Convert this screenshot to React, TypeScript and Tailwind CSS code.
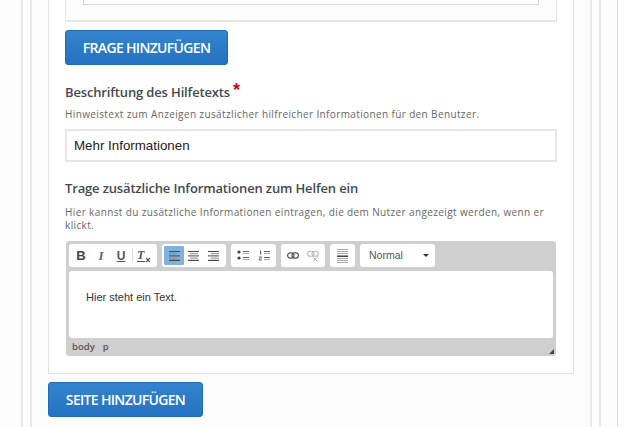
import React from "react";

const open = "font-['Open_Sans','Noto_Sans',sans-serif]";
const arial = "font-['Liberation_Sans',Arial,sans-serif]";

function Group({ w, children }: { w: string; children: React.ReactNode }) {
  return <div className={`relative shrink-0 h-[23px] bg-white rounded-[3px] ${w}`}>{children}</div>;
}

function Slot({ x, children }: { x: string; children: React.ReactNode }) {
  return (
    <span className={`absolute top-0 h-full flex items-center justify-center ${x}`}>
      {children}
    </span>
  );
}

function Lines({ kind }: { kind: "left" | "center" | "right" }) {
  const sx = kind === "left" ? 0 : kind === "center" ? 2 : 3;
  const c = "#4a4a4a";
  return (
    <svg width="11" height="10" viewBox="0 0 11 10">
      <rect x="0" y="0" width="11" height="1" fill={c} />
      <rect x={sx} y="2.2" width="8" height="1" fill="#8a8a8a" />
      <rect x="0" y="4.4" width="11" height="1" fill={c} />
      <rect x={sx} y="6.6" width="8" height="1" fill="#8a8a8a" />
      <rect x="0" y="8.8" width="11" height="1.2" fill={c} />
    </svg>
  );
}

function ListLines() {
  return (
    <>
      <rect x="6" y="1" width="6" height="1" fill="#666" />
      <rect x="6" y="3" width="6" height="1" fill="#aaa" />
      <rect x="6" y="7" width="6" height="1" fill="#666" />
      <rect x="6" y="9" width="6" height="1" fill="#aaa" />
    </>
  );
}

function BlueButton({ children, w }: { children: React.ReactNode; w: string }) {
  return (
    <button className={`${w} block h-[35px] rounded-[3px] border border-[#1e6cb4] bg-gradient-to-b from-[#3383cd] to-[#2373c2] text-white text-[14px] font-semibold tracking-[-0.68px] ${open}`}>
      {children}
    </button>
  );
}

export default function App() {
  return (
    <div className="w-[640px] h-[427px] overflow-hidden bg-white">
      <div className="w-[618px] h-full border-r border-[#dedede] bg-[#fdfdfd] pl-[21px]">
        <div className="w-[580px] h-full border-2 border-y-0 border-[#e6e6e6] bg-white px-[7px]">
          <div className="w-[562px] h-full border-2 border-y-0 border-[#e8e8e8] bg-[#fcfcfc] px-[16px] flex flex-col">
            <div className="h-[374px] w-[526px] shrink-0 border border-t-0 border-[#e2e2e2] bg-white px-[16px]">
              <div className="w-[492px] h-[22px] border-x border-b-2 border-[#e6e6e6] bg-[#fcfcfc] pl-[17px]">
                <div className="w-[456px] h-[5px] border-x border-b border-[#d8d8d8] bg-white" />
              </div>
              <div className="h-[8px]" />
              <BlueButton w="w-[163px]">FRAGE HINZUFÜGEN</BlueButton>
              <div className={`mt-[16px] flex items-start h-[22px] text-[13px] leading-[22px] font-semibold tracking-[-0.15px] text-[#43494f] ${open}`}>
                <span>Beschriftung des Hilfetexts</span>
                <span className={`ml-[3px] text-[#d8001c] text-[18px] leading-[18px] font-bold ${arial}`}>*</span>
              </div>
              <p className={`mt-[5px] h-[13px] text-[10px] leading-[13px] tracking-[0.375px] text-[#666] ${open}`}>
                Hinweistext zum Anzeigen zusätzlicher hilfreicher Informationen für den Benutzer.
              </p>
              <div className={`mt-[8px] w-[492px] h-[33px] border-2 border-[#e6e6e6] bg-white flex items-center pl-[7px] text-[13.33px] text-[#222] ${arial}`}>
                Mehr Informationen
              </div>
              <div className={`mt-[15px] h-[22px] text-[13px] leading-[22px] font-semibold tracking-[-0.15px] text-[#43494f] ${open}`}>
                Trage zusätzliche Informationen zum Helfen ein
              </div>
              <p className={`mt-[7px] w-[480px] text-[10px] leading-[13px] tracking-[0.375px] text-[#666] ${open}`}>
                Hier kannst du zusätzliche Informationen eintragen, die dem Nutzer angezeigt werden, wenn er klickt.
              </p>
              <div className="mt-[9px] ml-[1px] w-[490px] h-[115px] bg-[#cfcfcf] rounded-[3px] px-[3px] pt-[3px] relative flex flex-col">
                <div className="flex gap-[5px] h-[23px] items-center">
                  <Group w="w-[88px]">
                    <Slot x="left-[7px] w-[10px]"><span className={`text-[13px] leading-none font-bold text-[#444] ${arial}`}>B</span></Slot>
                    <Slot x="left-[27px] w-[10px]"><span className={`text-[13px] leading-none italic font-bold text-[#666] font-['Liberation_Serif',serif]`}>I</span></Slot>
                    <Slot x="left-[46px] w-[12px]"><span className={`text-[12px] leading-none font-bold underline text-[#555] ${arial}`}>U</span></Slot>
                    <span className="absolute left-[63px] top-[4px] w-px h-[15px] bg-[#dddddd]" />
                    <Slot x="left-[68px] w-[14px]">
                      <span className="relative block w-[14px] h-[14px]">
                        <span className={`absolute left-0 top-0 text-[12px] leading-[13px] italic font-bold text-[#555] font-['Liberation_Serif',serif]`}>T</span>
                        <span className="absolute left-0 top-[12px] w-[8px] h-px bg-[#555]" />
                        <svg className="absolute left-[8px] top-[8px]" width="6" height="6" viewBox="0 0 6 6"><path d="M1 1l4 4M5 1L1 5" stroke="#555" strokeWidth="1.1" /></svg>
                      </span>
                    </Slot>
                  </Group>
                  <Group w="w-[64px]">
                    <span className="absolute left-[2px] top-[2px] w-[20px] h-[19px] rounded-[1px] bg-[#7fb3de]" />
                    <Slot x="left-[7px] w-[11px]"><Lines kind="left" /></Slot>
                    <Slot x="left-[26px] w-[11px]"><Lines kind="center" /></Slot>
                    <Slot x="left-[46px] w-[11px]"><Lines kind="right" /></Slot>
                  </Group>
                  <Group w="w-[45px]">
                    <Slot x="left-[6px] w-[12px]">
                      <svg width="12" height="11" viewBox="0 0 12 11">
                        <circle cx="2" cy="2" r="1.6" fill="#444" />
                        <circle cx="2" cy="8" r="1.6" fill="#444" />
                        <ListLines />
                      </svg>
                    </Slot>
                    <Slot x="left-[27px] w-[12px]">
                      <svg width="12" height="11" viewBox="0 0 12 11">
                        <rect x="2" y="0.5" width="1.2" height="4" fill="#666" />
                        <path d="M0.8 6.5h3v2h-2v1h2v1h-3v-2.3h2v-.7h-2z" fill="#666" />
                        <ListLines />
                      </svg>
                    </Slot>
                  </Group>
                  <Group w="w-[44px]">
                    <Slot x="left-[6px] w-[12px]">
                      <svg width="12" height="7" viewBox="0 0 12 7" fill="none">
                        <rect x="0.6" y="0.8" width="6.4" height="5.4" rx="2.6" stroke="#555" strokeWidth="1.2" />
                        <rect x="5" y="0.8" width="6.4" height="5.4" rx="2.6" stroke="#555" strokeWidth="1.2" />
                      </svg>
                    </Slot>
                    <Slot x="left-[26px] w-[12px]">
                      <svg width="12" height="12" viewBox="0 0 12 12" fill="none">
                        <rect x="0.6" y="1.3" width="6.4" height="5" rx="2.5" stroke="#bbb" strokeWidth="1.1" />
                        <rect x="5" y="1.3" width="6.4" height="5" rx="2.5" stroke="#bbb" strokeWidth="1.1" />
                        <path d="M6.5 7.5l3.5 3.5M10 7.5L6.5 11" stroke="#aaa" strokeWidth="1" />
                      </svg>
                    </Slot>
                  </Group>
                  <Group w="w-[25px]">
                    <Slot x="left-[7px] w-[11px]">
                      <svg width="11" height="14" viewBox="0 0 11 14">
                        <rect y="0" width="11" height="1" fill="#aaa" />
                        <rect y="2" width="11" height="1" fill="#aaa" />
                        <rect y="4" width="11" height="1" fill="#aaa" />
                        <rect y="6.5" width="11" height="1.4" fill="#333" />
                        <rect y="9" width="11" height="1" fill="#aaa" />
                        <rect y="11" width="11" height="1" fill="#aaa" />
                        <rect y="13" width="11" height="1" fill="#aaa" />
                      </svg>
                    </Slot>
                  </Group>
                  <div className={`flex items-center justify-between w-[75px] shrink-0 h-[23px] bg-white rounded-[3px] pl-[9px] pr-[6px] text-[10.5px] text-[#555] ${arial}`}>
                    <span>Normal</span>
                    <span className="w-0 h-0 border-x-[3px] border-x-transparent border-t-[3px] border-t-[#333]" />
                  </div>
                </div>
                <div className={`mt-[4px] h-[67px] bg-white rounded-[3px] pl-[17px] pt-[19px] text-[11px] leading-[14px] text-[#333] ${arial}`}>
                  Hier steht ein Text.
                </div>
                <div className={`flex gap-[8px] pl-[3px] h-[18px] items-center text-[9.5px] font-semibold text-[#555] ${open}`}>
                  <span>body</span>
                  <span>p</span>
                </div>
                <span className="absolute right-[2px] bottom-[2px] w-0 h-0 border-l-[5px] border-l-transparent border-b-[5px] border-b-[#444]" />
              </div>
            </div>
            <div className="mt-[8px]">
              <BlueButton w="w-[155px]">SEITE HINZUFÜGEN</BlueButton>
            </div>
          </div>
        </div>
      </div>
    </div>
  );
}
